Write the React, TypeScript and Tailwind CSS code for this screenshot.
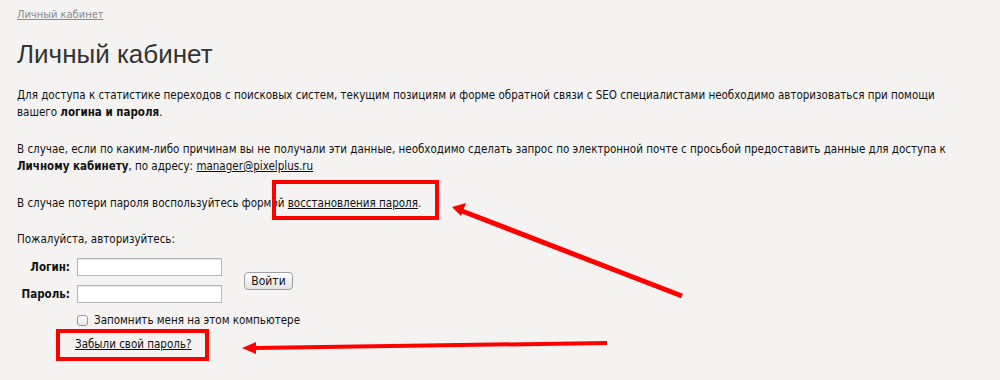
export default function App() {
  return (
    <div className="relative min-h-screen w-[1000px] h-[380px] overflow-hidden bg-[#f4f3f1] text-[#111] font-['DejaVu_Sans_Condensed','DejaVu_Sans',sans-serif] text-[11.5px] leading-[17px]">
      <div className="px-[17px] pt-[6px] w-[970px]">
        {/* Breadcrumbs */}
        <a href="#" className="text-[11px] text-[#8a8a8a] underline">
          Личный кабинет
        </a>

        <h1 className="mt-[16px] mb-[18px] font-['Liberation_Sans',Arial,sans-serif] text-[26px] leading-[30px] text-[#333]">
          Личный кабинет
        </h1>

        <p className="mb-[20px]">
          Для доступа к статистике переходов с поисковых систем, текущим позициям и форме обратной связи с SEO специалистами необходимо авторизоваться при помощи вашего <b>логина и пароля</b>.
        </p>

        <p className="mb-[20px]">
          В случае, если по каким-либо причинам вы не получали эти данные, необходимо сделать запрос по электронной почте с просьбой предоставить данные для доступа к <b>Личному кабинету</b>, по адресу:{" "}
          <a href="#" className="underline">manager@pixelplus.ru</a>
        </p>

        <p className="mb-[19px]">
          В случае потери пароля воспользуйтесь формой{" "}
          <a href="#" className="underline">восстановления пароля</a>.
        </p>

        <p className="mb-[10px]">Пожалуйста, авторизуйтесь:</p>

        {/* Login form */}
        <div className="flex items-center">
          <div className="grid grid-cols-[53px_145px] gap-x-[7px] gap-y-[9px] items-center">
            <label className="text-right font-bold">Логин:</label>
            <input className="h-[18px] bg-white border border-[#b5b5b5] shadow-[inset_0_1px_1px_rgba(0,0,0,0.1)]" />
            <label className="text-right font-bold">Пароль:</label>
            <input type="password" className="h-[18px] bg-white border border-[#b5b5b5] shadow-[inset_0_1px_1px_rgba(0,0,0,0.1)]" />
          </div>
          <button className="ml-[22px] h-[18px] w-[49px] rounded-[4px] border border-[#a0a0a0] bg-gradient-to-b from-white to-[#e4e4e4] text-[12px] leading-[16px] text-[#111]">
            Войти
          </button>
        </div>

        <label className="mt-[9px] ml-[60px] flex items-center gap-[6px]">
          <span className="w-[11px] h-[11px] rounded-[3px] border border-[#999] bg-gradient-to-b from-white to-[#e6e6e6]" />
          <span>Запомнить меня на этом компьютере</span>
        </label>

        <div className="mt-[7px] ml-[58px]">
          <a href="#" className="underline">Забыли свой пароль?</a>
        </div>
      </div>

      {/* Annotations */}
      <svg className="absolute inset-0 pointer-events-none" width="1000" height="380">
        <rect x="274" y="182" width="163" height="36" fill="none" stroke="#ff0000" strokeWidth="4" />
        <rect x="58" y="331" width="149" height="28" fill="none" stroke="#ff0000" strokeWidth="4" />
        <line x1="682" y1="296" x2="462" y2="211" stroke="#ff0000" strokeWidth="5" />
        <polygon points="452,207 466,203 461,216" fill="#ff0000" />
        <line x1="607" y1="343" x2="254" y2="348" stroke="#ff0000" strokeWidth="4" />
        <polygon points="242,348 256,342 256,354" fill="#ff0000" />
      </svg>
    </div>
  );
}
